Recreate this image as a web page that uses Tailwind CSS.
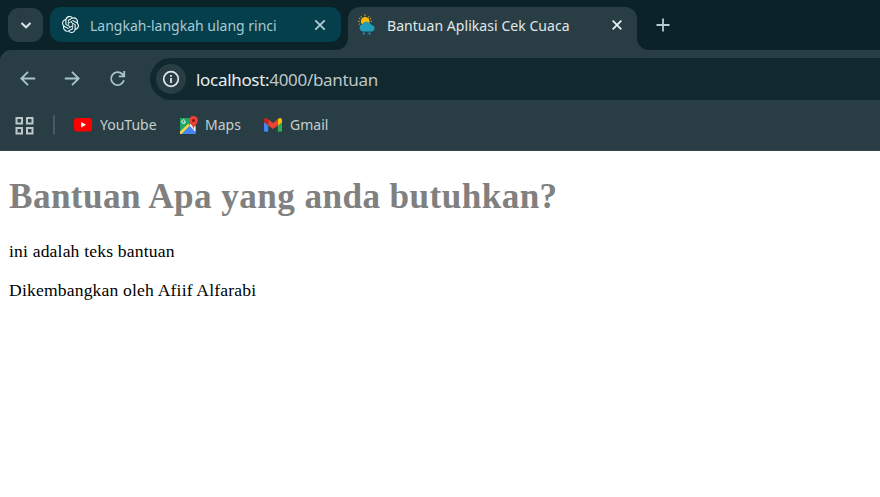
<!DOCTYPE html>
<html lang="id">
<head>
<meta charset="utf-8">
<title>Bantuan Aplikasi Cek Cuaca</title>
<script src="https://cdn.jsdelivr.net/npm/@tailwindcss/browser@4"></script>
</head>
<body class="bg-white w-[880px] h-[497px] overflow-hidden">
<div class="bg-[#0b2228] font-['Noto_Sans','Open_Sans',sans-serif]">
  <!-- Tab strip -->
  <div class="flex h-[50px] items-start">
    <div class="ml-2 mt-2 flex h-[34px] w-[35px] items-center justify-center rounded-[11px] bg-[#293e44]">
      <svg class="size-[12px]" viewBox="0 0 12 12" fill="none" stroke="#dbe4e8" stroke-width="2"><path d="M1.5 4 6 8.3 10.5 4"/></svg>
    </div>
    <div class="ml-[7px] mt-[7px] flex h-[35px] w-[291px] items-center rounded-[11px] bg-[#043f4b] pl-[12px] pr-[15px]">
      <svg class="size-[17px] shrink-0" viewBox="0 0 24 24" fill="#f2fafa"><path d="M22.2819 9.8211a5.9847 5.9847 0 0 0-.5157-4.9108 6.0462 6.0462 0 0 0-6.5098-2.9A6.0651 6.0651 0 0 0 4.9807 4.1818a5.9847 5.9847 0 0 0-3.9977 2.9 6.0462 6.0462 0 0 0 .7427 7.0966 5.98 5.98 0 0 0 .511 4.9107 6.051 6.051 0 0 0 6.5146 2.9001A5.9847 5.9847 0 0 0 13.2599 24a6.0557 6.0557 0 0 0 5.7718-4.2058 5.9894 5.9894 0 0 0 3.9977-2.9001 6.0557 6.0557 0 0 0-.7475-7.0729zm-9.022 12.6081a4.4755 4.4755 0 0 1-2.8764-1.0408l.1419-.0804 4.7783-2.7582a.7948.7948 0 0 0 .3927-.6813v-6.7369l2.02 1.1686a.071.071 0 0 1 .038.052v5.5826a4.504 4.504 0 0 1-4.4945 4.4944zm-9.6607-4.1254a4.4708 4.4708 0 0 1-.5346-3.0137l.142.0852 4.783 2.7582a.7712.7712 0 0 0 .7806 0l5.8428-3.3685v2.3324a.0804.0804 0 0 1-.0332.0615L9.74 19.9502a4.4992 4.4992 0 0 1-6.1408-1.6464zM2.3408 7.8956a4.485 4.485 0 0 1 2.3655-1.9728V11.6a.7664.7664 0 0 0 .3879.6765l5.8144 3.3543-2.0201 1.1685a.0757.0757 0 0 1-.071 0l-4.8303-2.7865A4.504 4.504 0 0 1 2.3408 7.872zm16.5963 3.8558L13.1038 8.364 15.1192 7.2a.0757.0757 0 0 1 .071 0l4.8303 2.7913a4.4944 4.4944 0 0 1-.6765 8.1042v-5.6772a.79.79 0 0 0-.407-.667zm2.0107-3.0231l-.142-.0852-4.7735-2.7818a.7759.7759 0 0 0-.7854 0L9.409 9.2297V6.8974a.0662.0662 0 0 1 .0284-.0615l4.8303-2.7866a4.4992 4.4992 0 0 1 6.6802 4.66zM8.3065 12.863l-2.02-1.1638a.0804.0804 0 0 1-.038-.0567V6.0742a4.4992 4.4992 0 0 1 7.3757-3.4537l-.142.0805L8.704 5.459a.7948.7948 0 0 0-.3927.6813zm1.0976-2.3654l2.602-1.4998 2.6069 1.4998v2.9994l-2.5974 1.4997-2.6067-1.4997Z"/></svg>
      <span class="ml-[11px] whitespace-nowrap pt-[2px] text-[14px] leading-[20px] text-[#a9c9d3]">Langkah-langkah ulang rinci</span>
      <svg class="ml-auto size-[12px] shrink-0" viewBox="0 0 12 12" fill="none" stroke="#b5d0d9" stroke-width="1.7"><path d="m1.3 1.3 9.4 9.4m0-9.4-9.4 9.4"/></svg>
    </div>
    <svg class="-ml-[5px] mt-[38px] h-3 w-3 shrink-0" viewBox="0 0 12 12" fill="#293e44"><path d="M12 0v12H0A12 12 0 0 0 12 0Z"/></svg>
    <div class="mt-[7px] flex h-[43px] w-[289px] items-start rounded-t-[12px] bg-[#293e44] pl-[10px] pr-[14px]">
      <svg class="mt-[7px] h-[21px] w-[18px] shrink-0" viewBox="0 0 18 21">
        <path d="m7-.1v1.800M2.800 1.600l.9 1.500m7.500-1.500-.9 1.500M.8 3.700l1.400 1m11-1-1.400 1M0 6.800h1.700M14 6.800h-1.500M.8 10l1.400-.9" transform="translate(0 .5)" stroke="#d9a514" stroke-width="1"/>
        <circle cx="7.200" cy="7.300" r="4.300" fill="#ffb703"/>
        <path d="M4.600 17.500a3.800 3.800 0 0 1-.4-7.300 5.100 4.800 0 0 1 9.200.8A3.300 3.300 0 0 1 14 17.500Z" fill="#219ebc"/>
        <path d="M5.800 18.600v1.900M11.500 18.600v1.900" stroke="#219ebc" stroke-width="1.800"/>
      </svg>
      <span class="ml-[11px] mt-[9px] whitespace-nowrap text-[14px] leading-[20px] tracking-[0.05px] text-[#e0e8ea]">Bantuan Aplikasi Cek Cuaca</span>
      <svg class="ml-auto mt-[12px] size-[12px] shrink-0" viewBox="0 0 12 12" fill="none" stroke="#edf3f5" stroke-width="1.700"><path d="m1.700 1.700 8.600 8.600m0-8.600-8.600 8.600"/></svg>
    </div>
    <svg class="mt-[38px] h-3 w-3 shrink-0" viewBox="0 0 12 12" fill="#293e44"><path d="M0 0v12h12A12 12 0 0 1 0 0Z"/></svg>
    <svg class="ml-[7px] mt-[18px] size-[14px] shrink-0" viewBox="0 0 14 14" fill="none" stroke="#b2cdd8" stroke-width="1.800"><path d="M7 .5v13M.5 7h13"/></svg>
  </div>

  <!-- Toolbar and bookmarks -->
  <div class="h-[101px] rounded-tl-[11px] border-b border-[#33484e] bg-[#293e44] pt-[8px]">
    <div class="flex h-[42px] items-center pl-[20px]">
      <svg class="size-4 shrink-0" viewBox="0 0 16 16" fill="none" stroke="#a9c4cd" stroke-width="1.800"><path d="M15.200 7.500H1.500M8 .8 1.300 7.500 8 14.200"/></svg>
      <svg class="ml-[28px] size-4 shrink-0" viewBox="0 0 16 16" fill="none" stroke="#a9c4cd" stroke-width="1.800"><path d="M.8 7.500h13.700M8 .8l6.700 6.700L8 14.200"/></svg>
      <svg class="ml-[29px] size-[18px] shrink-0" viewBox="0 0 18 18" fill="none" stroke="#a9c4cd" stroke-width="1.800"><path d="M14.900 10.300A6.500 6.500 0 1 1 13.200 4l1.900 1.900M15.200 1v5.300H9.800"/></svg>
      <div class="ml-[23px] flex h-full flex-1 items-center rounded-l-full bg-[#11282e] pl-[6px]">
        <div class="flex size-[30px] items-center justify-center rounded-full bg-[#293e44]">
          <svg class="size-[18px]" viewBox="0 0 18 18" fill="none" stroke="#e1e5e7"><circle cx="9" cy="9" r="7.300" stroke-width="1.700"/><path d="M9 8v5M9 5v1.800" stroke-width="1.800"/></svg>
        </div>
        <span class="ml-[10px] whitespace-nowrap pt-[2px] text-[17px] leading-[24px] tracking-[-0.310px] text-[#bdc7ca]"><span class="text-[#e7edef]">localhost:</span>4000/bantuan</span>
      </div>
    </div>
    <div class="flex h-[50px] items-center pl-[15px] text-[14px] leading-[20px] text-[#c6ced0]">
      <svg class="size-[19px] shrink-0" viewBox="0 0 19 19" fill="none" stroke="#bdc6c9" stroke-width="2"><path d="M1.500 2H7v5.500H1.500zM12 2h5.500v5.500H12zM1.500 12H7v5.500H1.500zM12 12h5.500v5.500H12z"/></svg>
      <div class="ml-[19px] h-5 w-[2px] rounded-full bg-[#455c63]"></div>
      <svg class="ml-[19px] h-[14px] w-[18px] shrink-0" viewBox="0 0 18 14"><rect width="18" height="13.500" rx="3" fill="#f00"/><path d="m7.200 4 4.800 2.800-4.800 2.800Z" fill="#fff"/></svg>
      <span class="ml-[8px] w-[58px] whitespace-nowrap">YouTube</span>
      <svg class="ml-[22px] size-[18px] shrink-0" viewBox="0 0 18 18">
        <path d="M0 2h15.500v16H0Z" fill="#1fa463"/><path d="M0 17.500 9.200 8.500l6.300 7V18H0Z" fill="#4285f4"/><path d="M1.500 18 9.200 10.200 8.500 7.500 0 15.500V18Z" fill="#ffd04b"/><path d="m9.200 9.300 3-2.800 3.300 4V16Z" fill="#f1f3f4"/><path d="M5.500 5.700H3.800m1.600.1a1.800 1.800 0 1 1-.5-1.400" stroke="#fff" stroke-width=".9" fill="none"/><path d="M13.500 0A4.300 4.300 0 0 0 9.200 4.400c0 3.300 3.600 4.200 4.300 9 .7-4.800 4.300-5.700 4.300-9A4.300 4.300 0 0 0 13.500 0Z" fill="#ea4335"/><circle cx="13.500" cy="4.400" r="1.500" fill="#811411"/>
      </svg>
      <span class="ml-[7px] w-[37px] whitespace-nowrap">Maps</span>
      <svg class="ml-[22px] h-[14px] w-[18px] shrink-0" viewBox="0 0 18 14">
        <path d="M0 3.500 4.200 6v7.800H1.300A1.300 1.300 0 0 1 0 12.500Z" fill="#4285f4"/><path d="M18 3.500 13.800 6v7.800h2.900a1.300 1.300 0 0 0 1.300-1.300Z" fill="#34a853"/><path d="M13.800 1.300 15 .5c1.300-1 3-.1 3 1.500v2.300l-4.200 3.200Z" fill="#fbbc04"/><path d="M4.200 7.500V1.300L9 4.900l4.800-3.600v6.200L9 11.100Z" fill="#ea4335"/><path d="M0 2v2.300l4.200 3.200V1.300L3 .5C1.700-.5 0 .4 0 2Z" fill="#c5221f"/>
      </svg>
      <span class="ml-[8px] whitespace-nowrap">Gmail</span>
    </div>
  </div>
</div>
<main class="px-[9px] pt-[25px] font-['Liberation_Serif',serif] text-[17.6px] leading-[20px] tracking-[0.17px] text-black">
  <h1 class="text-[35.2px] font-bold leading-[41px] tracking-[0.41px] text-[#808080]">Bantuan Apa yang anda butuhkan?</h1>
  <p class="mt-[24px]">ini adalah teks bantuan</p>
  <p class="mt-[19px]">Dikembangkan oleh Afiif Alfarabi</p>
</main>
</body>
</html>
